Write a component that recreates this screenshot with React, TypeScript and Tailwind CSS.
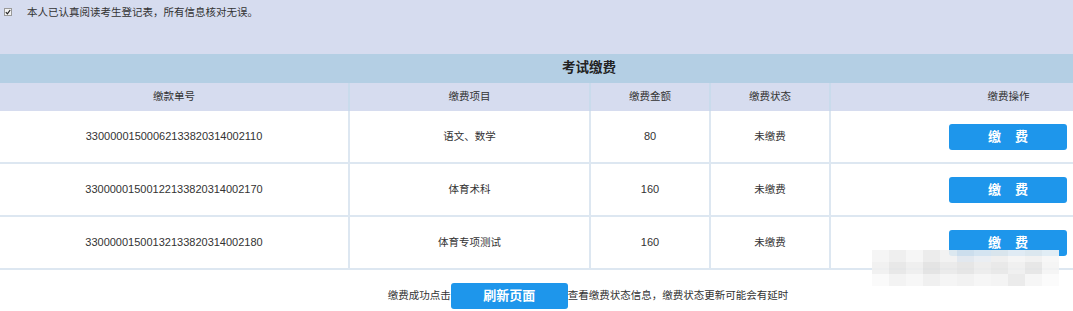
import React from "react";

const rows = [
  { no: "33000001500062133820314002110", item: "语文、数学", amount: "80", status: "未缴费" },
  { no: "33000001500122133820314002170", item: "体育术科", amount: "160", status: "未缴费" },
  { no: "33000001500132133820314002180", item: "体育专项测试", amount: "160", status: "未缴费" },
];

const cols = "grid grid-cols-[348px_241px_120px_120px_349px]";

// mosaic blur that hides part of the page in the screenshot
const mosaic = [
  "#f4f4f4", "#eeeeee", "#f6f6f6", "#ebebeb", "#f1f1f1", "#dfe6ee", "#e8edf2", "#eeeeee", "#f5f5f5", "#f0f0f0", "#f7f7f7",
  "#f0f0f0", "#e6e6e6", "#eeeeee", "#e2e2e2", "#e9e9e9", "#e4e4e4", "#ececec", "#e7e7e7", "#efefef", "#e5e5e5", "#f4f4f4",
  "#fafafa", "#f2f2f2", "#f7f7f7", "#efefef", "#f5f5f5", "#f1f1f1", "#f6f6f6", "#f3f3f3", "#e9e9e9", "#f6f6f6", "#fbfbfb",
];

export default function App() {
  return (
    <div
      className="relative w-[1073px] h-[311px] overflow-hidden bg-white text-[10.5px] text-[#333]"
      style={{ fontFamily: '"Liberation Sans", "Noto Sans CJK SC", sans-serif' }}
    >
      {/* 确认 */}
      <div className="h-[54px] bg-[#d6dcef] flex items-start pt-[5px] pl-[4px]">
        <span className="mt-[3px] w-[8px] h-[8px] border border-[#9a9a9a] bg-[#f3f3f3] flex items-center justify-center">
          <svg width="6" height="6" viewBox="0 0 6 6">
            <path d="M0.8 3.2 L2.4 4.8 L5.2 1" stroke="#222" strokeWidth="1.2" fill="none" />
          </svg>
        </span>
        <span className="ml-[15px] leading-[14px]">本人已认真阅读考生登记表，所有信息核对无误。</span>
      </div>

      <div className="w-[1178px]">
        {/* 标题 */}
        <div className="h-[29px] bg-[#b4cfe4] flex items-center justify-center text-[13.5px] font-bold text-[#222]">
          考试缴费
        </div>

        {/* 表头 */}
        <div className={`${cols} h-[28px] bg-[#d6dcef] text-[#333]`}>
          <div className="flex items-center justify-center">缴款单号</div>
          <div className="flex items-center justify-center border-l-2 border-[#c9dbec]">缴费项目</div>
          <div className="flex items-center justify-center border-l-2 border-[#c9dbec]">缴费金额</div>
          <div className="flex items-center justify-center border-l-2 border-[#c9dbec]">缴费状态</div>
          <div className="flex items-center justify-center border-l-2 border-[#c9dbec] pl-[8px]">缴费操作</div>
        </div>

        {/* 数据 */}
        {rows.map((r, i) => (
          <div key={i} className={`${cols} h-[53px] border-b-2 border-[#dde7f1]`}>
            <div className="flex items-center justify-center text-[11px]">{r.no}</div>
            <div className="flex items-center justify-center border-l-2 border-[#dde7f1]">{r.item}</div>
            <div className="flex items-center justify-center border-l-2 border-[#dde7f1] text-[11px]">{r.amount}</div>
            <div className="flex items-center justify-center border-l-2 border-[#dde7f1]">{r.status}</div>
            <div className="flex items-center border-l-2 border-[#dde7f1] pl-[118px]">
              <button className="w-[118px] h-[26px] rounded-[3px] bg-[#1e96eb] text-white text-[13px] font-bold tracking-[14px] pl-[14px]">
                缴费
              </button>
            </div>
          </div>
        ))}

        {/* 底部 */}
        <div className="flex items-center justify-center pt-[13px] pr-[2px]">
          <span>缴费成功点击</span>
          <button className="w-[117px] h-[26px] rounded-[3px] bg-[#1e96eb] text-white text-[13px] font-bold">
            刷新页面
          </button>
          <span>查看缴费状态信息，缴费状态更新可能会有延时</span>
        </div>
      </div>

      {/* 马赛克 */}
      <div className="absolute left-[872px] top-[250px] w-[187px] grid grid-cols-11 opacity-90">
        {mosaic.map((c, i) => (
          <div key={i} className="h-[12px]" style={{ backgroundColor: c }} />
        ))}
      </div>
    </div>
  );
}
